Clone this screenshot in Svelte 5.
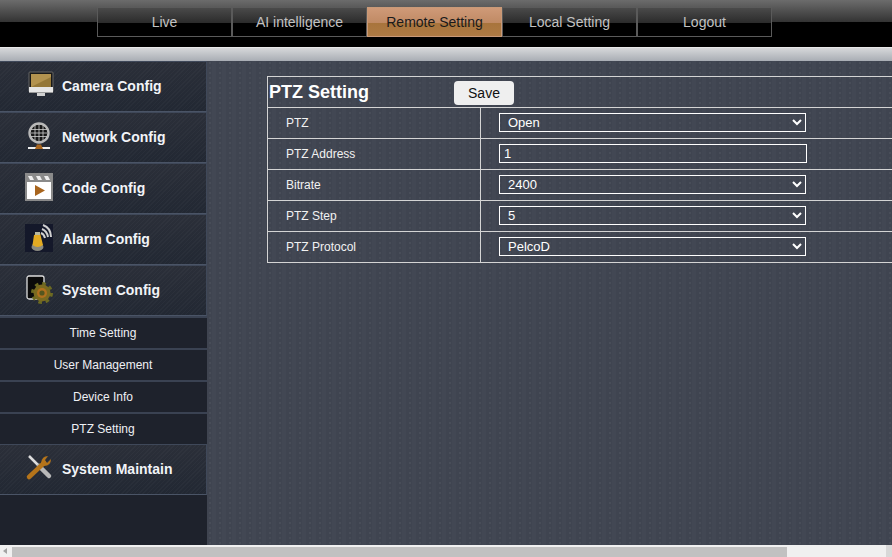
<script>
  const navItems = ['Live', 'AI intelligence', 'Remote Setting', 'Local Setting', 'Logout'];
  const subItems = ['Time Setting', 'User Management', 'Device Info', 'PTZ Setting'];
  const selects = [
    { label: 'PTZ', value: 'Open' },
    { label: 'PTZ Address', input: true, value: '1' },
    { label: 'Bitrate', value: '2400' },
    { label: 'PTZ Step', value: '5' },
    { label: 'PTZ Protocol', value: 'PelcoD' }
  ];
</script>

<div class="page">
  <header class="top">
    <nav class="nav">
      {#each navItems as item, i}
        <a href="#top" class="nav-item" class:active={i === 2}>{item}</a>
      {/each}
    </nav>
  </header>
  <div class="strip"></div>

  <div class="body">
    <aside class="side">
      <div class="group">
        <svg width="30" height="30" viewBox="0 0 30 30">
          <rect x="3" y="1" width="24" height="20" rx="1" fill="#1a1a1a" stroke="#666" />
          <rect x="5" y="3" width="20" height="13" fill="#b3934f" />
          <path d="M5 16 L25 6 V16 Z" fill="#957838" />
          <rect x="3" y="16" width="24" height="5" fill="#e6e6e6" />
          <rect x="3" y="21" width="24" height="1" fill="#999" />
          <rect x="11" y="22" width="8" height="3" fill="#d0d0d0" />
        </svg>
        <span>Camera Config</span>
      </div>
      <div class="group">
        <svg width="30" height="30" viewBox="0 0 30 30">
          <circle cx="13" cy="11" r="9.5" fill="#161616" stroke="#b8b8b8" stroke-width="2.4" />
          <path d="M5 7.5 H21 M5 11 H21 M5 14.5 H21 M9 3 V19 M13 2 V20 M17 3 V19" stroke="#cfcfcf" stroke-width="0.8" />
          <rect x="2" y="25" width="22" height="2" fill="#eee" />
          <path d="M9 27 L11 22.5 H15 L17 27 Z" fill="#a8651e" />
        </svg>
        <span>Network Config</span>
      </div>
      <div class="group">
        <svg width="30" height="30" viewBox="0 0 30 30">
          <rect x="-1" y="0" width="28" height="28" fill="#8a8a8a" />
          <rect x="1" y="9" width="24" height="17" fill="#fff" />
          <path d="M2 3 H6 L8 7 H4 Z M10 3 H14 L16 7 H12 Z M18 3 H22 L24 7 H20 Z" fill="#eee" />
          <path d="M9 12 L19 17.5 L9 23 Z" fill="#a8651e" />
        </svg>
        <span>Code Config</span>
      </div>
      <div class="group">
        <svg width="30" height="30" viewBox="0 0 30 30">
          <rect x="-1" y="0" width="28" height="28" fill="#14182a" />
          <path d="M15 9 Q18 10 19 14 M16 5 Q21 7 22 13 M17 1 Q25 4 25 13" fill="none" stroke="#d0d0d0" stroke-width="2" />
          <ellipse cx="11.5" cy="23" rx="6" ry="4" fill="#8a8a80" />
          <path d="M6.5 21 L8 11 L14 9 L17 21 Q11.5 25 6.5 21 Z" fill="#e3aa22" />
          <rect x="9" y="8" width="5" height="3" fill="#b8b8a0" />
        </svg>
        <span>Alarm Config</span>
      </div>
      <div class="group">
        <svg width="30" height="30" viewBox="0 0 30 30">
          <rect x="1" y="1" width="17" height="23" rx="2" fill="#0a0a0a" stroke="#ddd" stroke-width="1.3" />
          <circle cx="16" cy="18" r="9.5" fill="none" stroke="#6c6a22" stroke-width="3" stroke-dasharray="3.6 3.85" />
          <circle cx="16" cy="18" r="8.5" fill="#7a6a20" />
          <circle cx="16" cy="18" r="5" fill="#b0701e" />
          <circle cx="16" cy="18" r="2.6" fill="#54561f" />
        </svg>
        <span>System Config</span>
      </div>
      <ul class="subs">
        {#each subItems as sub}
          <li>{sub}</li>
        {/each}
      </ul>
      <div class="group">
        <svg width="30" height="30" viewBox="0 0 30 30">
          <path d="M3 2 L22 21" stroke="#ddd" stroke-width="2.5" />
          <path d="M13 12 L23 22" stroke="#b8b8b8" stroke-width="4.5" stroke-linecap="round" />
          <path d="M3 23 L18 9" stroke="#b5741a" stroke-width="4.5" stroke-linecap="round" />
          <path d="M15 9 Q16 2 22 2 L19 6 L21 9 L25 5 Q25 12 18 12 Z" fill="#b5741a" />
        </svg>
        <span>System Maintain</span>
      </div>
    </aside>

    <main class="main">
      <table class="form">
        <thead>
          <tr>
            <th colspan="2">
              <div class="head">
                <h1>PTZ Setting</h1>
                <button type="button">Save</button>
              </div>
            </th>
          </tr>
        </thead>
        <tbody>
          {#each selects as row}
            <tr>
              <td class="label">{row.label}</td>
              <td class="field">
                {#if row.input}
                  <input type="text" value={row.value} />
                {:else}
                  <select>
                    <option>{row.value}</option>
                  </select>
                {/if}
              </td>
            </tr>
          {/each}
        </tbody>
      </table>
    </main>
  </div>

  <div class="hscroll">
    <span class="arrow"></span>
    <span class="thumb"></span>
    <span class="end"></span>
  </div>
</div>

<style>
  :global(body) { margin: 0; overflow: hidden; background: #3f4450; }
  .page {
    width: 892px; height: 557px; display: flex; flex-direction: column; overflow: hidden;
    font-family: "Liberation Sans", Arial, sans-serif;
  }

  .top {
    height: 47px; box-sizing: border-box; padding: 7px 0 0 97px;
    background: linear-gradient(#6c6c6c 0, #333 22px, #000 22px);
  }
  .nav { display: flex; }
  .nav-item {
    width: 135px; height: 30px; box-sizing: border-box; line-height: 29px;
    border: 1px solid #5a5a5a; text-align: center; font-size: 14px;
    color: #c2c2c2; text-decoration: none;
    background: linear-gradient(#4a4a4a 0, #2b2b2b 15px, #000 15px);
  }
  .nav-item.active {
    color: #1a1a1a; border-color: #c99a78;
    background: linear-gradient(#cf9a78 0, #c08a64 15px, #a8743c 15px, #ad7a44 100%);
  }

  .strip {
    height: 14px; box-sizing: border-box; border-top: 1px solid #e8e8e8;
    background: linear-gradient(#d6d8da, #a9adb4);
  }

  .body { flex: 1; display: flex; min-height: 0; }

  .side { width: 207px; flex: none; background: #1e222c; display: flex; flex-direction: column; }
  .group {
    height: 51px; box-sizing: border-box; flex: none; display: flex; align-items: center; gap: 6px;
    padding: 0 0 2px 26px; color: #f2f4f8; font-size: 14px; font-weight: bold;
    border-top: 1px solid #3f4859; border-bottom: 1px solid #4a5466; border-right: 1px solid #3f4859;
    background:
      repeating-linear-gradient(135deg, rgba(255,255,255,0.025) 0 1px, transparent 1px 3px),
      linear-gradient(#2b2f39, #222833);
  }
  .group svg { flex: none; overflow: visible; }
  .subs { list-style: none; margin: 0; padding: 0; }
  .subs li {
    height: 32px; box-sizing: border-box; padding-right: 1px; line-height: 31px; text-align: center;
    font-size: 12px; color: #eef0f4; border-top: 2px solid #3a4252; overflow: hidden;
  }

  .main {
    flex: 1; min-width: 0; overflow: hidden; padding: 15px 0 0 60px;
    background-color: #3f4450;
    background-image:
      radial-gradient(circle at 3px 2px, #484d58 0 0.8px, transparent 1.2px),
      radial-gradient(circle at 3px 7px, #464b56 0 0.8px, transparent 1.2px),
      linear-gradient(90deg, transparent 5px, #424753 5px, #424753 9px, transparent 9px);
    background-size: 10px 10px, 10px 10px, 10px 5px;
  }

  .form {
    width: 700px; border-collapse: collapse; color: #f2f2f2; font-size: 12px;
  }
  .form th, .form td { border: 1px solid #d4d4d4; padding: 0; height: 30px; }
  .head { display: flex; align-items: center; height: 30px; }
  h1 { margin: 0 0 0 1px; width: 185px; font-size: 18px; line-height: 30px; text-align: left; color: #fff; }
  button {
    width: 60px; height: 24px; padding: 0; margin-top: 2px; border: none; border-radius: 4px; background: #efefef;
    font: 14px "Liberation Sans", Arial, sans-serif; color: #111;
  }
  .label { width: 213px; padding-left: 18px !important; box-sizing: border-box; }
  .field { padding-left: 18px !important; }
  select, input {
    display: block; box-sizing: border-box; height: 19px; width: 307px; padding: 0 0 0 4px; margin-bottom: 2px;
    background: transparent; color: #fff; border: 1px solid #fff;
    font: 13px "Liberation Sans", Arial, sans-serif; border-radius: 0; outline: none;
  }
  input { width: 308px; }
  option { color: #000; }

  .hscroll { height: 12px; flex: none; display: flex; background: #f0f0f0; }
  .arrow { width: 12px; flex: none; position: relative; background: #f0f0f0; }
  .arrow::before {
    content: ''; position: absolute; left: 3px; top: 3px;
    border: 3px solid transparent; border-right: 4px solid #a3a3a3; border-left: 0;
  }
  .thumb { width: 775px; background: #c1c1c1; margin-top: 2px; }
  .end { margin-left: auto; width: 6px; background: #d8d8d8; }
</style>
